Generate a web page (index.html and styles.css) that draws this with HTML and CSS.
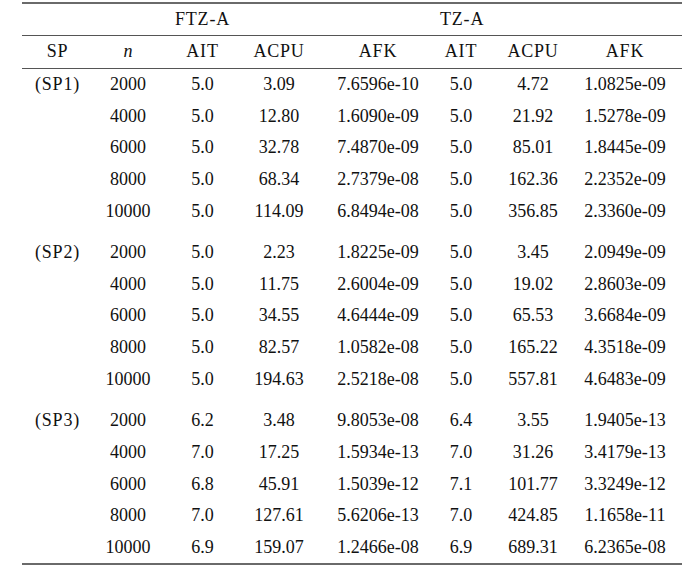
FILE: index.html
```html
<!DOCTYPE html>
<html>
<head>
<meta charset="utf-8">
<link rel="stylesheet" href="styles.css">
</head>
<body>
<div class="tbl">
  <div class="row head1">
    <div class="c c1"></div><div class="c c2"></div><div class="c c3 lbl">FTZ-A</div><div class="c c4"></div><div class="c c5"></div><div class="c c6 lbl">TZ-A</div><div class="c c7"></div><div class="c c8"></div>
  </div>
  <div class="row head2">
    <div class="c c1 lbl">SP</div><div class="c c2"><i>n</i></div><div class="c c3 lbl">AIT</div><div class="c c4 lbl">ACPU</div><div class="c c5 lbl">AFK</div><div class="c c6 lbl">AIT</div><div class="c c7 lbl">ACPU</div><div class="c c8 lbl">AFK</div>
  </div>
  <div class="body">
    <div class="row"><div class="c c1 lbl">(SP1)</div><div class="c c2">2000</div><div class="c c3">5.0</div><div class="c c4">3.09</div><div class="c c5">7.6596e-10</div><div class="c c6">5.0</div><div class="c c7">4.72</div><div class="c c8">1.0825e-09</div></div>
    <div class="row"><div class="c c1"></div><div class="c c2">4000</div><div class="c c3">5.0</div><div class="c c4">12.80</div><div class="c c5">1.6090e-09</div><div class="c c6">5.0</div><div class="c c7">21.92</div><div class="c c8">1.5278e-09</div></div>
    <div class="row"><div class="c c1"></div><div class="c c2">6000</div><div class="c c3">5.0</div><div class="c c4">32.78</div><div class="c c5">7.4870e-09</div><div class="c c6">5.0</div><div class="c c7">85.01</div><div class="c c8">1.8445e-09</div></div>
    <div class="row"><div class="c c1"></div><div class="c c2">8000</div><div class="c c3">5.0</div><div class="c c4">68.34</div><div class="c c5">2.7379e-08</div><div class="c c6">5.0</div><div class="c c7">162.36</div><div class="c c8">2.2352e-09</div></div>
    <div class="row"><div class="c c1"></div><div class="c c2">10000</div><div class="c c3">5.0</div><div class="c c4">114.09</div><div class="c c5">6.8494e-08</div><div class="c c6">5.0</div><div class="c c7">356.85</div><div class="c c8">2.3360e-09</div></div>

    <div class="row gs"><div class="c c1 lbl">(SP2)</div><div class="c c2">2000</div><div class="c c3">5.0</div><div class="c c4">2.23</div><div class="c c5">1.8225e-09</div><div class="c c6">5.0</div><div class="c c7">3.45</div><div class="c c8">2.0949e-09</div></div>
    <div class="row"><div class="c c1"></div><div class="c c2">4000</div><div class="c c3">5.0</div><div class="c c4">11.75</div><div class="c c5">2.6004e-09</div><div class="c c6">5.0</div><div class="c c7">19.02</div><div class="c c8">2.8603e-09</div></div>
    <div class="row"><div class="c c1"></div><div class="c c2">6000</div><div class="c c3">5.0</div><div class="c c4">34.55</div><div class="c c5">4.6444e-09</div><div class="c c6">5.0</div><div class="c c7">65.53</div><div class="c c8">3.6684e-09</div></div>
    <div class="row"><div class="c c1"></div><div class="c c2">8000</div><div class="c c3">5.0</div><div class="c c4">82.57</div><div class="c c5">1.0582e-08</div><div class="c c6">5.0</div><div class="c c7">165.22</div><div class="c c8">4.3518e-09</div></div>
    <div class="row"><div class="c c1"></div><div class="c c2">10000</div><div class="c c3">5.0</div><div class="c c4">194.63</div><div class="c c5">2.5218e-08</div><div class="c c6">5.0</div><div class="c c7">557.81</div><div class="c c8">4.6483e-09</div></div>

    <div class="row gs"><div class="c c1 lbl">(SP3)</div><div class="c c2">2000</div><div class="c c3">6.2</div><div class="c c4">3.48</div><div class="c c5">9.8053e-08</div><div class="c c6">6.4</div><div class="c c7">3.55</div><div class="c c8">1.9405e-13</div></div>
    <div class="row"><div class="c c1"></div><div class="c c2">4000</div><div class="c c3">7.0</div><div class="c c4">17.25</div><div class="c c5">1.5934e-13</div><div class="c c6">7.0</div><div class="c c7">31.26</div><div class="c c8">3.4179e-13</div></div>
    <div class="row"><div class="c c1"></div><div class="c c2">6000</div><div class="c c3">6.8</div><div class="c c4">45.91</div><div class="c c5">1.5039e-12</div><div class="c c6">7.1</div><div class="c c7">101.77</div><div class="c c8">3.3249e-12</div></div>
    <div class="row"><div class="c c1"></div><div class="c c2">8000</div><div class="c c3">7.0</div><div class="c c4">127.61</div><div class="c c5">5.6206e-13</div><div class="c c6">7.0</div><div class="c c7">424.85</div><div class="c c8">1.1658e-11</div></div>
    <div class="row"><div class="c c1"></div><div class="c c2">10000</div><div class="c c3">6.9</div><div class="c c4">159.07</div><div class="c c5">1.2466e-08</div><div class="c c6">6.9</div><div class="c c7">689.31</div><div class="c c8">6.2365e-08</div></div>
  </div>
</div>
</body>
</html>
```

FILE: styles.css
```css
html, body {
  margin: 0;
  padding: 0;
  background: #ffffff;
}

body {
  padding-top: 2px;
  font-family: "Liberation Serif", "DejaVu Serif", serif;
  font-size: 18px;
  color: #111111;
}

.tbl {
  margin-left: 22px;
  width: 660px;
  border-top: 2px solid #6a6a6a;
  border-bottom: 2px solid #6a6a6a;
}

.row {
  display: grid;
  grid-template-columns: 71px 70px 79px 74px 124px 42px 102px 82px;
  height: 31.7px;
  align-items: center;
  box-sizing: border-box;
}

.head1 {
  height: 31px;
  border-bottom: 1px solid #555555;
  box-sizing: content-box;
}

.head2 {
  height: 31.7px;
  border-bottom: 1px solid #555555;
  box-sizing: content-box;
}

.row.gs {
  height: 41.3px;
  padding-top: 9.6px;
}

.c {
  text-align: center;
  white-space: nowrap;
}

.lbl {
  letter-spacing: 0.8px;
}

.c2 i {
  font-style: italic;
}
```
